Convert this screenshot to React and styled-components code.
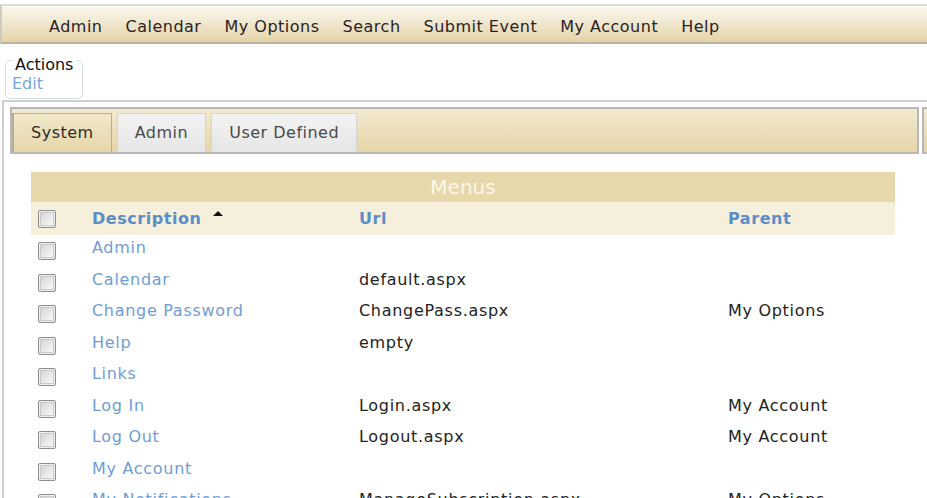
import React from "react";
import styled, { createGlobalStyle } from "styled-components";

const Global = createGlobalStyle`
  html, body { margin: 0; padding: 0; background: #fff; overflow: hidden; }
  body { font-family: "DejaVu Sans", Verdana, sans-serif; font-size: 16px; }
`;

const TopBar = styled.nav`
  margin-top: 4px;
  height: 30px;
  padding-top: 6px;
  border-top: 2px solid #dcdcdc;
  border-left: 2px solid #cfcac0;
  border-bottom: 2px solid #b9b3a5;
  background: linear-gradient(#faf7ef, #f0e8d0 45%, #e4d4a5);
  display: flex;
  gap: 23px;
  padding-left: 47px;
`;

const NavItem = styled.span`
  line-height: 30px;
  color: #2a2226;
  letter-spacing: 0.5px;
  white-space: nowrap;
`;

const ActionsBox = styled.div`
  margin: 16px 0 0 5px;
  width: 78px;
  height: 39px;
  border: 1px solid #d3dee6;
  border-radius: 5px;
  padding: 0 0 0 6px;
  box-sizing: border-box;
`;

const ActionsTitle = styled.div`
  width: max-content;
  margin-top: -6px;
  padding: 0 3px;
  background: #fff;
  color: #111;
  line-height: 19px;
`;

const EditLink = styled.div`
  color: #7aa4d8;
  line-height: 19px;
`;

const Panel = styled.div`
  margin: 1px 0 0 2px;
  border-top: 2px solid #cfcfcf;
  border-left: 2px solid #cfcfcf;
  padding: 5px 0 0 6px;
`;

const TabRow = styled.div`
  display: flex;
  gap: 3px;
`;

const TabBar = styled.div`
  width: 909px;
  box-sizing: border-box;
  height: 47px;
  border: 2px solid #b8b8b8;
  background: linear-gradient(#f2ead0, #e5d5a7);
  padding: 4px 0 0 0;
  display: flex;
  gap: 5px;
  align-items: flex-end;
`;

const TabEdge = styled.div`
  flex: 1;
  height: 47px;
  box-sizing: border-box;
  border: 2px solid #b8b8b8;
  border-right: none;
  background: linear-gradient(#f2ead0, #e5d5a7);
`;

const Tab = styled.div`
  height: 39px;
  box-sizing: border-box;
  padding: 0 17px;
  line-height: 37px;
  letter-spacing: 0.5px;
  white-space: nowrap;
  border: 1px solid ${(p) => (p.$active ? "#b3ada0" : "#d4d4d4")};
  border-bottom: none;
  border-left-width: ${(p) => (p.$active ? "2px" : "1px")};
  color: ${(p) => (p.$active ? "#2c2c2c" : "#4a4a4a")};
  background: ${(p) =>
    p.$active
      ? "linear-gradient(#f1e8cc, #e6d6a8)"
      : "linear-gradient(#f3f3f3, #e6e6e6)"};
`;

const Table = styled.div`
  margin: 18px 0 0 21px;
  width: 864px;
`;

const TitleRow = styled.div`
  height: 30px;
  background: #e6d8ab;
  color: #fbf7ea;
  font-size: 20px;
  line-height: 30px;
  text-align: center;
`;

const cols = "61px 267px 369px 1fr";

const HeaderRow = styled.div`
  height: 33px;
  background: #f6efdc;
  display: grid;
  grid-template-columns: ${cols};
  align-items: center;
`;

const HeadCell = styled.div`
  font-weight: bold;
  letter-spacing: 0.55px;
  color: #5b8dc6;
  display: flex;
  align-items: center;
`;

const SortArrow = styled.span`
  margin-left: 11px;
  width: 0;
  height: 0;
  border-left: 5px solid transparent;
  border-right: 5px solid transparent;
  border-bottom: 5px solid #111;
  transform: translateY(-5px);
`;

const Row = styled.div`
  height: 31.5px;
  box-sizing: border-box;
  padding-top: 3px;
  display: grid;
  grid-template-columns: ${cols};
  align-items: start;
`;

const Check = styled.span`
  display: block;
  margin: ${(p) => (p.$head ? "0" : "4px")} 0 0 7px;
  width: 18px;
  height: 18px;
  box-sizing: border-box;
  border: 1px solid #8e8e8e;
  border-radius: 2px;
  box-shadow: inset 0 0 0 1px #f0f0f0, inset 0 0 0 2px #c9c9c9;
  background: linear-gradient(135deg, #cfcfcf, #f6f6f6 80%);
`;

const LinkCell = styled.div`
  color: #6f9dd4;
  line-height: 20px;
  letter-spacing: 0.7px;
  white-space: nowrap;
`;

const TextCell = styled.div`
  color: #222;
  line-height: 20px;
  letter-spacing: 0.7px;
  white-space: nowrap;
`;

const menus = [
  ["Admin", "", ""],
  ["Calendar", "default.aspx", ""],
  ["Change Password", "ChangePass.aspx", "My Options"],
  ["Help", "empty", ""],
  ["Links", "", ""],
  ["Log In", "Login.aspx", "My Account"],
  ["Log Out", "Logout.aspx", "My Account"],
  ["My Account", "", ""],
  ["My Notifications", "ManageSubscription.aspx", "My Options"],
];

const navItems = ["Admin", "Calendar", "My Options", "Search", "Submit Event", "My Account", "Help"];

export default function App() {
  return (
    <>
      <Global />
      <TopBar>
        {navItems.map((n) => (
          <NavItem key={n}>{n}</NavItem>
        ))}
      </TopBar>
      <ActionsBox>
        <ActionsTitle>Actions</ActionsTitle>
        <EditLink>Edit</EditLink>
      </ActionsBox>
      <Panel>
        <TabRow>
          <TabBar>
            <Tab $active>System</Tab>
            <Tab>Admin</Tab>
            <Tab>User Defined</Tab>
          </TabBar>
          <TabEdge />
        </TabRow>
        <Table>
          <TitleRow>Menus</TitleRow>
          <HeaderRow>
            <Check $head />
            <HeadCell>
              Description
              <SortArrow />
            </HeadCell>
            <HeadCell>Url</HeadCell>
            <HeadCell>Parent</HeadCell>
          </HeaderRow>
          {menus.map(([d, u, p]) => (
            <Row key={d}>
              <Check />
              <LinkCell>{d}</LinkCell>
              <TextCell>{u}</TextCell>
              <TextCell>{p}</TextCell>
            </Row>
          ))}
        </Table>
      </Panel>
    </>
  );
}
